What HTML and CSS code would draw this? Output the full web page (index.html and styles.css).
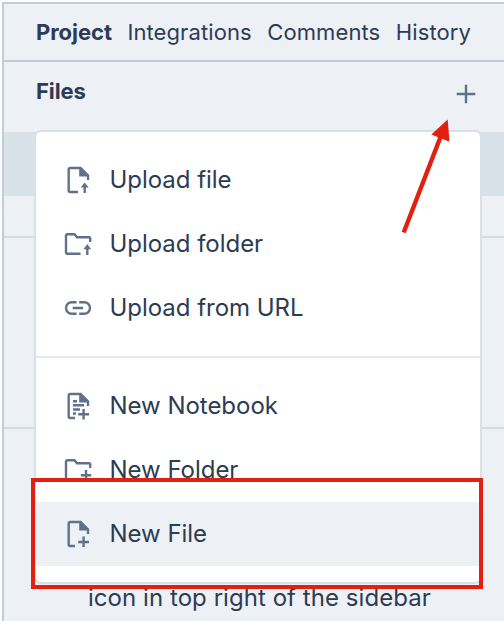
FILE: index.html
```
<!DOCTYPE html>
<html lang="en">
<head>
<meta charset="utf-8">
<title>Project files</title>
<link rel="stylesheet" href="styles.css">
</head>
<body>
<main class="sidebar">
  <nav class="tabs">
    <a class="tab active">Project</a>
    <a class="tab">Integrations</a>
    <a class="tab">Comments</a>
    <a class="tab">History</a>
  </nav>
  <header class="files-head">
    <h1>Files</h1>
    <svg class="plus" viewBox="0 0 20 20"><path d="M10 .7v18.6M.7 10h18.6"/></svg>
  </header>
  <div class="row selected"></div>
  <div class="row short"></div>
  <div class="row tall"></div>
  <p class="hint">icon in top right of the sidebar</p>

  <div class="menu">
    <div class="group">
      <div class="item">
        <svg class="icon" viewBox="0 0 28 28"><path d="M14 26H6.200A1.500 1.500 0 0 1 4.700 24.500V3.500A1.500 1.500 0 0 1 6.200 2H16.500L24 9.500V14"/><path class="solid" d="M15.200 1.500H17.200L25.100 9.400V10.600H15.200Z"/><path d="M20.700 27V19"/><path class="solid" d="M20.700 16.400L24.700 21.500H16.700Z"/></svg>
        <span>Upload file</span>
      </div>
      <div class="item">
        <svg class="icon" viewBox="0 0 28 28"><path d="M16.500 23.700H3.300A1.300 1.300 0 0 1 2 22.400V5.500A1.300 1.300 0 0 1 3.300 4.200H10.500L13 7.200H25A1.100 1.100 0 0 1 26.200 8.400V12"/><path d="M23.300 25V17"/><path class="solid" d="M23.300 14L27.200 19.200H19.400Z"/></svg>
        <span>Upload folder</span>
      </div>
      <div class="item">
        <svg class="icon" viewBox="0 0 28 28"><path d="M12.500 8.300H7.700A5.700 5.700 0 0 0 7.700 19.700H12.500M15.200 8.300H20.300A5.700 5.700 0 0 1 20.300 19.700H15.200M8.700 14H19"/></svg>
        <span>Upload from URL</span>
      </div>
    </div>
    <div class="group">
      <div class="item">
        <svg class="icon" viewBox="0 0 28 28"><path d="M11 26H6.200A1.500 1.500 0 0 1 4.700 24.500V3.500A1.500 1.500 0 0 1 6.200 2H16.500L24 9.500V14"/><path class="solid" d="M15.200 1.500H17.200L25.100 9.400V10.600H15.200Z"/><path d="M9 9.200h4M9 13.300h11M9 17.500h7M9 21.500h3M14.200 22.300H25M19.600 17V27.500"/></svg>
        <span>New Notebook</span>
      </div>
      <div class="item">
        <svg class="icon" viewBox="0 0 28 28"><path d="M16.500 24.500H3.300A1.300 1.300 0 0 1 2 23.200V5.500A1.300 1.300 0 0 1 3.300 4.200H10.500L13 7.200H25A1.100 1.100 0 0 1 26.200 8.400V12M16.800 19.200H27.200M22 14V24.500"/></svg>
        <span>New Folder</span>
      </div>
      <div class="item hover">
        <svg class="icon" viewBox="0 0 28 28"><path d="M11 26H6.200A1.500 1.500 0 0 1 4.700 24.500V3.500A1.500 1.500 0 0 1 6.200 2H16.500L24 9.500V14"/><path class="solid" d="M15.200 1.500H17.200L25.100 9.400V10.600H15.200Z"/><path d="M14.200 22H25M19.600 16.500V27"/></svg>
        <span>New File</span>
      </div>
    </div>
  </div>
  <div class="highlight"></div>
  <svg class="arrow" viewBox="0 0 124 150"><path class="shaft" d="M23.700 132.500L60.500 37"/><path class="head" d="M67.700 19.500L51.300 34.500L69.500 41.700Z"/></svg>
</main>
</body>
</html>
```
FILE: styles.css
```
* { box-sizing: border-box; }
body {
  margin: 0;
  padding: 2px 0 0 2px;
  width: 504px;
  height: 621px;
  overflow: hidden;
  background: #fbfcfd;
  color: #2d3b53;
  font: 24px/32px Inter, "Liberation Sans", sans-serif;
}
.sidebar {
  height: 619px;
  background: #edf0f5;
  border: solid #c3cbd8;
  border-width: 2px 0 0 2px;
}
.tabs {
  display: flex;
  height: 58px;
  padding: 0 0 0 32px;
  align-items: center;
  gap: 15.5px;
  border-bottom: 2px solid #c3cbd8;
  white-space: nowrap;
}
.tab { font-size: 22px; letter-spacing: 0.1px; }
.active { font-weight: 700; letter-spacing: -0.05px; }
.files-head {
  display: flex;
  justify-content: space-between;
  height: 70px;
  padding: 13px 28px 0 32px;
}
h1 { margin: 0; font-size: 22px; line-height: 32px; font-weight: 700; letter-spacing: -0.1px; }
.plus { width: 20px; height: 20px; margin-top: 9px; }
.row { border-bottom: 2px solid #d2dae3; }
.selected { height: 64px; background: #d8e0e8; border: 0; }
.short { height: 42px; }
.tall { height: 191px; }
.hint { margin: 153px 0 0 84px; letter-spacing: 0.05px; white-space: nowrap; }
.menu {
  position: absolute;
  left: 34px;
  top: 130px;
  width: 448px;
  height: 454px;
  border: 2px solid #d8dfe7;
  border-radius: 7px;
  background: #fff;
}
.group { padding: 16px 0; }
.group + .group { border-top: 2px solid #e5e9ef; }
.item {
  display: flex;
  align-items: center;
  height: 64px;
  padding-left: 28px;
  gap: 17.5px;
  white-space: nowrap;
  letter-spacing: -0.03px;
}
.hover { background: #edf0f5; }
.icon { width: 28px; height: 28px; }
.icon, .plus { fill: none; stroke: #62718a; stroke-width: 2.4; }
.icon .solid { fill: #62718a; stroke: none; }
.highlight {
  position: absolute;
  left: 31px;
  top: 478px;
  width: 452px;
  height: 111px;
  border: 4px solid #e22010;
}
.arrow { position: absolute; left: 380px; top: 100px; width: 124px; height: 150px; }
.shaft { fill: none; stroke: #e22010; stroke-width: 4.4; }
.head { fill: #e22010; }
```
